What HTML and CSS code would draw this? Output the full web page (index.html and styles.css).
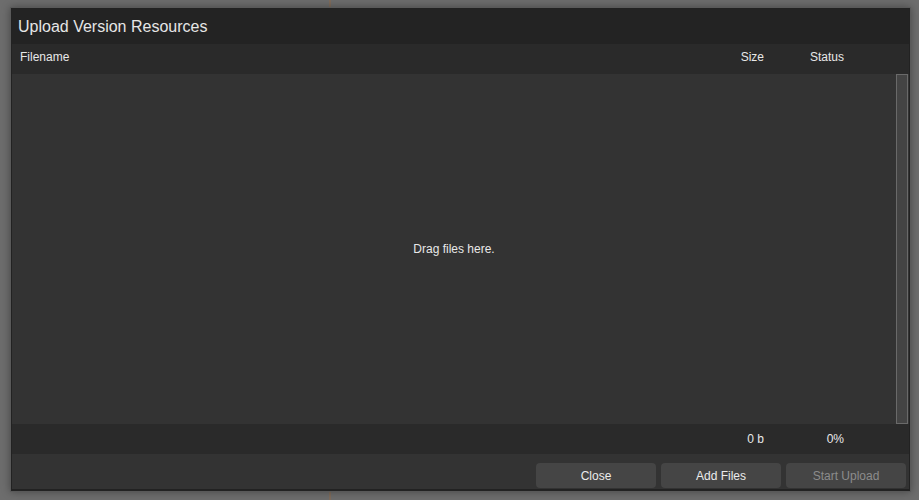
FILE: index.html
```html
<!DOCTYPE html>
<html>
<head>
<meta charset="utf-8">
<link rel="stylesheet" href="styles.css">
</head>
<body>
<div class="page">
  <div class="dialog">
    <div class="title">Upload Version Resources</div>
    <div class="row head">
      <span>Filename</span>
      <span class="num">Size</span>
      <span class="num">Status</span>
    </div>
    <div class="body">
      <div class="drop">Drag files here.</div>
      <div class="track"></div>
    </div>
    <div class="row foot">
      <span></span>
      <span class="num">0 b</span>
      <span class="num">0%</span>
    </div>
    <div class="buttons">
      <button class="btn">Close</button>
      <button class="btn">Add Files</button>
      <button class="btn disabled">Start Upload</button>
    </div>
  </div>
</div>
</body>
</html>
```
FILE: styles.css
```css
html, body {
  margin: 0;
  padding: 0;
}
body {
  width: 919px;
  height: 500px;
  overflow: hidden;
  background-color: #6d6d6d;
  background-image: linear-gradient(to right, transparent 329px, #7e6c5c 329px, #7e6c5c 331px, transparent 331px);
  font-family: "Liberation Sans", Arial, sans-serif;
}
.page {
  padding: 7px 0 0 10px;
}
.dialog {
  width: 897px;
  border: 1px solid #595959;
  padding: 1px 1px 2px 1px;
  background: #222;
  box-shadow: 0 0 8px rgba(0, 0, 0, 0.35);
  display: flex;
  flex-direction: column;
}
.title {
  height: 35px;
  line-height: 35px;
  background: #232323;
  color: #e6e6e6;
  font-size: 16px;
  padding-left: 6px;
}
.row {
  height: 30px;
  background: #2a2a2a;
  display: grid;
  grid-template-columns: 1fr 80px 80px;
  padding: 0 65px 0 8px;
  align-items: center;
  font-size: 12px;
  color: #e8e8e8;
}
.head {
  padding-bottom: 5px;
  height: 25px;
}
.num {
  text-align: right;
}
.body {
  height: 350px;
  background: #333;
  display: flex;
}
.drop {
  flex: 1;
  display: flex;
  align-items: center;
  justify-content: center;
  font-size: 12px;
  color: #e8e8e8;
}
.track {
  width: 10px;
  margin-right: 1px;
  background: #444;
  border: 1px solid #6a6a6a;
}
.buttons {
  height: 35px;
  background: #333;
  display: flex;
  justify-content: flex-end;
  gap: 5px;
  padding: 9px 3px 0 0;
  box-sizing: border-box;
}
.btn {
  width: 120px;
  height: 25px;
  border: none;
  border-radius: 4px;
  background: #454545;
  color: #ececec;
  font-family: "Liberation Sans", Arial, sans-serif;
  font-size: 12px;
  padding: 0;
}
.btn.disabled {
  color: #8c8c8c;
}
```
